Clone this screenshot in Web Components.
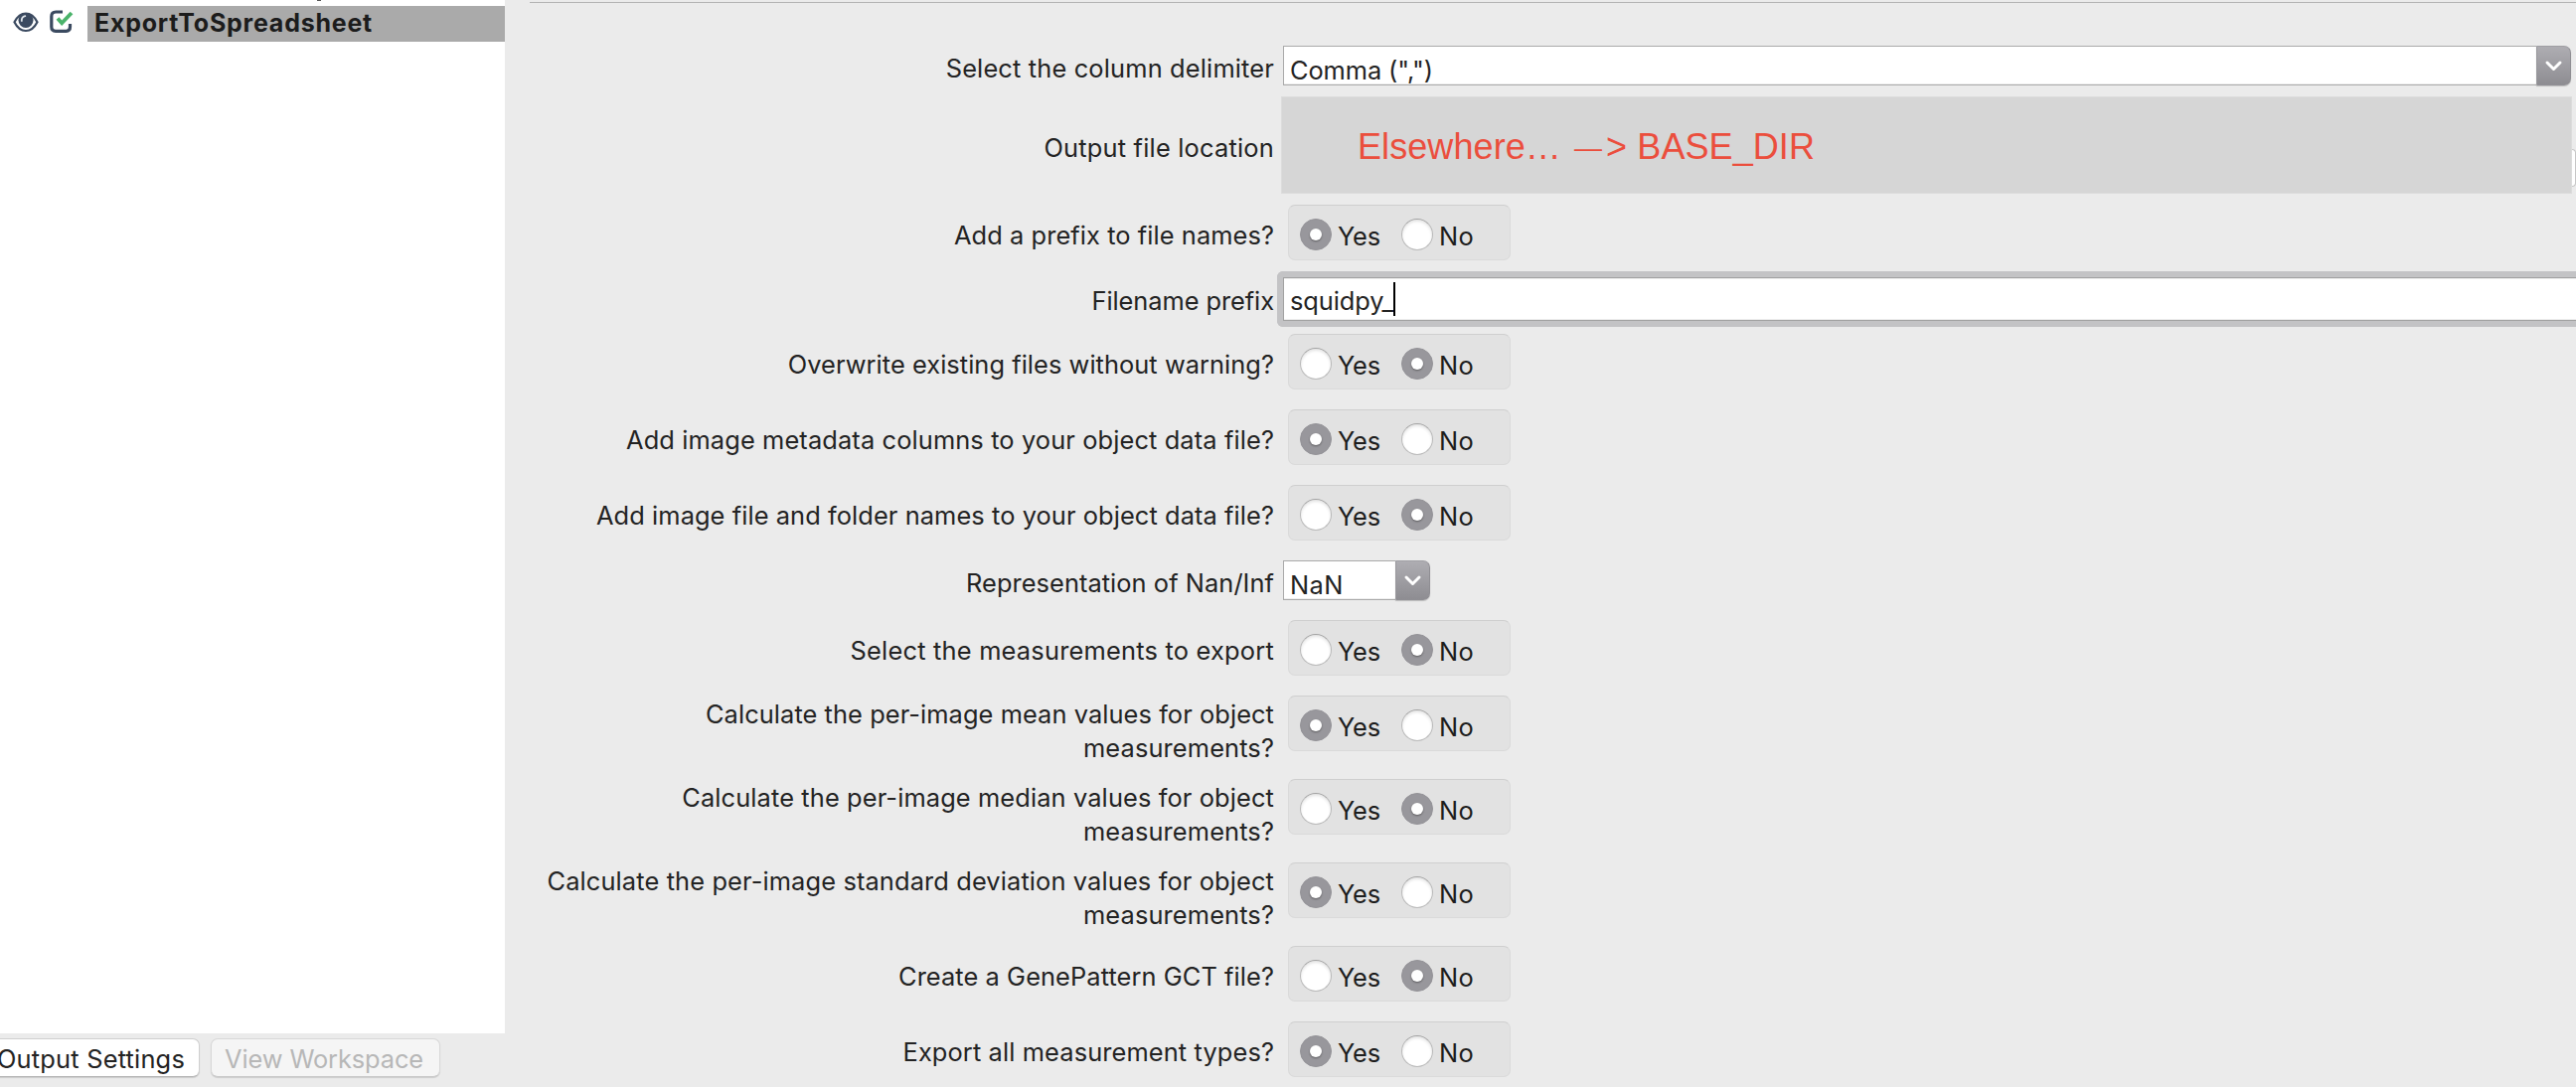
<!DOCTYPE html>
<html lang="en"><head><meta charset="utf-8"><title>ExportToSpreadsheet</title>
<style>
html,body{margin:0;width:2592px;height:1094px;overflow:hidden;background:#ebebeb}
body{font-family:Inter,"Liberation Sans",sans-serif;font-size:25.4px;line-height:34px;color:#232323}
</style></head><body><pipeline-app></pipeline-app>
<script>
const define=(name,html,setup)=>customElements.define(name,class extends HTMLElement{
  constructor(){super();this.attachShadow({mode:'open'})}
  connectedCallback(){this.shadowRoot.innerHTML=typeof html==='function'?html(this):html;if(setup)setup(this)}
});
// A line of text tracked so that its advance equals the "w" attribute.
define('fit-text',`<style>:host{display:block;white-space:pre}span{display:inline-block}</style><span><slot></slot></span>`,el=>{
  const s=el.shadowRoot.querySelector('span'),w=+el.getAttribute('w'),n=[...el.textContent].length;
  if(w)s.style.letterSpacing=((w-s.getBoundingClientRect().width)/n)+'px';
});
define('radio-dot',`<style>:host{display:block;box-sizing:border-box;width:32px;height:32px;border-radius:50%;background:#fff;border:1px solid #b9b9b9;border-top-color:#a2a2a2;box-shadow:inset 0 2px 3px #0000001c}
:host([on]){background:#98979c;border-color:#949398;box-shadow:none;padding:9px}
i{display:none;width:12px;height:12px;border-radius:50%;background:#fff;box-shadow:0 1px 2px #0006}:host([on]) i{display:block}</style><i></i>`);
define('yes-no',el=>{const y=el.getAttribute('value')==='yes';return `<style>:host{display:flex;box-sizing:border-box;width:224px;height:56px;margin-left:5px;padding:11px;padding-top:13px;border:1px solid #dadada;border-top-color:#cfcfcf;border-radius:7px;background:#e2e2e2}
radio-dot{flex:none}fit-text{padding-top:1px;margin-left:6px;width:64px;flex:none;color:#1d1d1d}.n{margin-left:6px}</style>
<radio-dot ${y?'on':''}></radio-dot><fit-text w="43">Yes</fit-text><radio-dot ${y?'':'on'}></radio-dot><fit-text class="n" w="35">No</fit-text>`});
define('combo-box',`<style>:host{display:flex;height:40px}.f{flex:1;box-sizing:border-box;border:1px solid #aaa;border-right:0;background:#fff;padding:7px 0 0 6px;overflow:hidden;height:40px;box-shadow:inset 0 -1px 0 #eee}
.b{box-sizing:border-box;width:35px;height:40px;flex:none;border-radius:0 7px 7px 0;border:1px solid #8f8e93;border-top-color:#a09fa4;border-left-color:#98979c;background:linear-gradient(#aeadb2,#8e8d92);box-shadow:0 1px 1px #0003}svg{display:block}</style>
<div class="f"><slot></slot></div><div class="b"><svg width="33" height="38" viewBox="0 0 33 38"><path d="M10 16l6.500 6.500L23 16" fill="none" stroke="#fff" stroke-width="3" stroke-linecap="round" stroke-linejoin="round"/></svg></div>`);
define('covered-location',`<style>:host{display:flex;height:98px;width:1303px;margin-left:-2px}.c{box-sizing:border-box;width:1299px;border:1px solid #dcdcdc;background:#d6d6d6;padding:30px 0 0 76px;flex:none;font:36px/40px "Liberation Sans",Arial,sans-serif;color:#eb4e3d}
.e{width:4px;height:38px;margin-top:53px;box-sizing:border-box;background:#fff;border:1px solid #c6c6c6;border-left:0;border-radius:0 8px 8px 0}</style><div class="c"><slot></slot></div><div class="e"></div>`);
define('text-field',`<style>:host{display:flex;box-sizing:border-box;height:56px;width:1310px;margin-left:-6px;border:6px solid #c3c3c5;border-right:0;border-radius:6px 0 0 6px}
.f{box-sizing:border-box;flex:1;display:flex;border:1px solid #a2a2a2;border-right:0;background:#fff;padding:6px 0 0 6px;box-shadow:inset 0 -1px #eee,inset 0 1px #eee}i{display:block;width:2px;height:34px;margin-top:-2px;background:#000}</style><div class="f"><slot></slot><i></i></div>`);
define('setting-row',el=>`<style>:host{display:flex;height:${el.getAttribute('h')||56}px;margin-top:${el.getAttribute('gap')||20}px}
.l{flex:none;box-sizing:border-box;width:774px;padding-top:${el.getAttribute('pad')||14}px;display:flex;flex-direction:column;align-items:flex-end}.c{margin-left:9px;flex:none}</style><div class="l"><slot name="label"></slot></div><div class="c"><slot></slot></div>`);
define('push-button',`<style>:host{display:block;box-sizing:border-box;height:39px;border:1px solid #cfcfcf;border-bottom-color:#b5b5b5;border-radius:7px;background:#fff;box-shadow:0 1px 1px #0002;padding-top:3px}
:host([disabled]){background:#f5f5f5;color:#b7b7b7;border-color:#d8d8d8;border-bottom-color:#c9c9c9}</style><slot></slot>`);
define('module-item',`<style>:host{display:flex;height:36px;margin-top:4px}.i{display:flex;width:88px;box-sizing:border-box;padding:3px 0 0 13px;gap:10px}.n{flex:1;background:#aaa;padding:0 0 0 7px;font-weight:700;font-size:25px;color:#1c1c1c}svg{display:block;flex:none}</style>
<div class="i"><svg width="26" height="26" viewBox="0 0 26 26"><path d="M1.500 13.200Q6 4.500 13 4.500T24.500 13.200Q20 22 13 22T1.500 13.200Z" fill="#fff" stroke="#3b4a60" stroke-width="2.200"/><circle cx="13" cy="11.500" r="7.500" fill="#3b4a60"/><path d="M8.800 12q-.3-3.800 3.500-4.800" fill="none" stroke="#dfe5eb" stroke-width="1.800" stroke-linecap="round"/></svg>
<svg width="26" height="26" viewBox="0 0 26 26"><path d="M14 3H7.200Q2.800 3 2.800 7.400v10.700q0 4.200 4.200 4.200h10.600q3.900 0 3.900-4.200V15" fill="none" stroke="#3b4a60" stroke-width="3.200"/><path d="M9 9.500l4.200 4.800L23 4" fill="none" stroke="#4bb36b" stroke-width="3.800"/></svg></div><div class="n"><slot></slot></div>`);
define('side-panel',`<style>:host{display:block;width:508px;flex:none;overflow:hidden}.m{height:1040px;background:#fff;overflow:hidden}.s{height:2px;padding-left:319px}.s i{display:block;width:4px;height:1px;background:#555}.b{display:flex;gap:11px;padding-top:5px}
.o{width:211px;margin-left:-10px}.o fit-text{margin-left:6px}.v{width:231px}.v fit-text{margin-left:13px}</style>
<div class="m"><div class="s"><i></i></div><module-item><fit-text w="280">ExportToSpreadsheet</fit-text></module-item></div>
<div class="b"><push-button class="o"><fit-text w="189">Output Settings</fit-text></push-button><push-button class="v" disabled><fit-text w="200">View Workspace</fit-text></push-button></div>`);
const yn=(v,labels,gap,pad)=>`<setting-row ${gap?`gap="${gap}"`:''} ${pad?`pad="${pad}"`:''}><div slot="label">${labels.map(([t,x])=>`<fit-text w="${1283-x}">${t}</fit-text>`).join('')}</div><yes-no value="${v}"></yes-no></setting-row>`;
const lab=(t,x)=>`<fit-text slot="label" w="${1283-x}">${t}</fit-text>`;
define('settings-panel',`<style>:host{display:block;flex:1;padding-top:2px;overflow:hidden}.t{box-sizing:border-box;height:1px;margin-left:25px;background:#b3b3b3}.g{height:43px}[slot=label]{display:flex;flex-direction:column;align-items:flex-end}combo-box{width:1296px}.nan{width:148px}
.dash{font-size:28px;padding:0 4px 0 3px;vertical-align:2px;line-height:1}</style>
<div class="t"></div><div class="g"></div>
<setting-row h="40" gap="0" pad="6">${lab('Select the column delimiter',952.7)}<combo-box><fit-text w="144">Comma (",")</fit-text></combo-box></setting-row>
<setting-row h="98" gap="11" pad="35">${lab('Output file location',1051.4)}<covered-location><fit-text w="460">Elsewhere… <span class="dash">—</span>&gt; BASE_DIR</fit-text></covered-location></setting-row>
${yn('yes',[['Add a prefix to file names?',961]],11)}
<setting-row gap="11" pad="13">${lab('Filename prefix',1099.5)}<text-field><fit-text w="104">squidpy_</fit-text></text-field></setting-row>
${yn('no',[['Overwrite existing files without warning?',793.8]],7)}
${yn('yes',[['Add image metadata columns to your object data file?',631]])}
${yn('no',[['Add image file and folder names to your object data file?',601]])}
<setting-row h="40" pad="6">${lab('Representation of Nan/Inf',973)}<combo-box class="nan"><fit-text w="54">NaN</fit-text></combo-box></setting-row>
${yn('no',[['Select the measurements to export',856.5]])}
${yn('yes',[['Calculate the per-image mean values for object',711],['measurements?',1091]],20,2)}
${yn('no',[['Calculate the per-image median values for object',687.3],['measurements?',1091]],28,2)}
${yn('yes',[['Calculate the per-image standard deviation values for object',551.5],['measurements?',1091]],28,2)}
${yn('no',[['Create a GenePattern GCT file?',905]],28)}
${yn('yes',[['Export all measurement types?',909.5]])}`);
define('pipeline-app',`<style>:host{display:flex;width:2592px;height:1094px;overflow:hidden;background:#ebebeb}</style><side-panel></side-panel><settings-panel></settings-panel>`);
</script></body></html>
